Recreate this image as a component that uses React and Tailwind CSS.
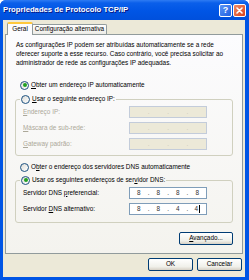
import React from "react";

function Radio({ checked }) {
  return (
    <span className="w-[9px] h-[9px] shrink-0 rounded-full border border-[#1C5180] bg-[linear-gradient(135deg,#DCDCD7,#FFFFFF)] flex items-center justify-center">
      {checked && <span className="w-[4px] h-[4px] rounded-full bg-[#21A121]" />}
    </span>
  );
}

function IpBox({ values, disabled, caret }) {
  const parts = values || ["", "", "", ""];
  return (
    <div
      className={
        "w-[78px] h-[12px] flex items-center border " +
        (disabled ? "border-[#C3CCDA] bg-[#ECE9D8] text-[#ACA899]" : "border-[#7F9DB9] bg-white text-[#333]")
      }
    >
      {parts.map((p, i) => (
        <React.Fragment key={i}>
          <span className="flex-1 text-center leading-none flex items-center justify-center">
            {p}
            {caret && i === 3 && <span className="inline-block w-[1px] h-[8px] bg-black ml-[1px]" />}
          </span>
          {i < 3 && <span className={"leading-none " + (disabled ? "text-[#C9C6B6]" : "")}>.</span>}
        </React.Fragment>
      ))}
    </div>
  );
}

function Row({ label, disabled, values, caret }) {
  return (
    <div className="flex items-center h-[12px] pl-[3px]">
      <span className={"flex-1 leading-none whitespace-nowrap " + (disabled ? "text-[#ACA899]" : "")}>{label}</span>
      <IpBox values={values} disabled={disabled} caret={caret} />
    </div>
  );
}

function Btn({ children, w }) {
  return (
    <div
      className={
        w +
        " h-[13px] rounded-[2px] border border-[#003C74] bg-[linear-gradient(to_bottom,#FFFFFF,#F0F0EA_70%,#D6D0C5)] flex items-center justify-center leading-none"
      }
    >
      {children}
    </div>
  );
}

export default function App() {
  return (
    <div className="w-[249px] h-[280px] flex flex-col bg-[#0055E5] rounded-t-[6px] overflow-hidden font-['Liberation_Sans',Arial,sans-serif] text-[6.4px] text-black">
      <div className="h-[20px] shrink-0 flex items-center pl-[3px] pr-[3px] bg-[linear-gradient(to_bottom,#2E7BF3_0%,#0A5FEA_15%,#0055E5_55%,#0050DC_100%)]">
        <span className="text-white font-bold text-[7.7px] leading-none [text-shadow:1px_1px_0_#0A1883]">
          Propriedades de Protocolo TCP/IP
        </span>
        <div className="ml-auto flex gap-[1px]">
          <div className="w-[13px] h-[13px] rounded-[2px] border border-white bg-[linear-gradient(135deg,#5A95F7,#2260E0)] flex items-center justify-center text-white font-bold text-[9px] leading-none">
            ?
          </div>
          <div className="w-[13px] h-[13px] rounded-[2px] border border-white bg-[linear-gradient(135deg,#F08A68,#D9431C)] flex items-center justify-center">
            <svg width="7" height="7" viewBox="0 0 7 7">
              <path d="M1 1 L6 6 M6 1 L1 6" stroke="white" strokeWidth="1.6" strokeLinecap="round" />
            </svg>
          </div>
        </div>
      </div>

      <div className="flex-1 ml-[3px] mr-[4px] mb-[3px] bg-[#ECE9D8] flex flex-col">
        <div className="h-[14px] flex items-end pl-[4px]">
          <div className="relative z-10 w-[26px] h-[13px] mb-[-1px] bg-[#FCFCFE] border-x border-[#919B9C] border-t-[2px] border-t-[#FFC83C] rounded-t-[2px] flex items-center justify-center leading-none">
            Geral
          </div>
          <div className="w-[74px] h-[10px] whitespace-nowrap border-t border-r border-[#919B9C] rounded-tr-[2px] bg-[linear-gradient(to_bottom,#FFFFFF,#ECEBE6)] flex items-center justify-center leading-none">
            Configuração alternativa
          </div>
        </div>

        <div className="mx-[2px] h-[220px] border border-[#919B9C] bg-[linear-gradient(to_bottom,#FCFCFE,#F4F3EE)] flex flex-col px-[9px]">
          <p className="pt-[5px] pl-[1px] leading-[9px] whitespace-nowrap">
            As configurações IP podem ser atribuídas automaticamente se a rede
            <br />
            oferecer suporte a esse recurso. Caso contrário, você precisa solicitar ao
            <br />
            administrador de rede as configurações IP adequadas.
          </p>

          <div className="mt-[13px] h-[10px] flex items-center gap-[2px] pl-[5px] leading-none">
            <Radio checked />
            <span>
              <u>O</u>bter um endereço IP automaticamente
            </span>
          </div>

          <fieldset className="mt-[4px] border border-[#D0D0BF] rounded-[3px] pl-[4px] pr-[25px] pb-[5px]">
            <legend className="px-[1px]">
              <div className="h-[10px] flex items-center gap-[2px] leading-none">
                <Radio />
                <span>
                  <u>U</u>sar o seguinte endereço IP:
                </span>
              </div>
            </legend>
            <div className="pt-[2px] flex flex-col gap-[4px]">
              <Row disabled label={<><u>E</u>ndereço IP:</>} />
              <Row disabled label={<><u>M</u>áscara de sub-rede:</>} />
              <Row disabled label={<><u>G</u>ateway padrão:</>} />
            </div>
          </fieldset>

          <div className="mt-[6px] h-[10px] flex items-center gap-[2px] pl-[5px] leading-none">
            <Radio />
            <span>
              O<u>b</u>ter o endereço dos servidores DNS automaticamente
            </span>
          </div>

          <fieldset className="mt-[3px] border border-[#D0D0BF] rounded-[3px] pl-[4px] pr-[25px] pb-[7px]">
            <legend className="px-[1px]">
              <div className="h-[10px] flex items-center gap-[2px] leading-none">
                <Radio checked />
                <span>
                  Usar os seguintes endereços de ser<u>v</u>idor DNS:
                </span>
              </div>
            </legend>
            <div className="pt-[2px] flex flex-col gap-[4px]">
              <Row label={<>Servidor DNS <u>p</u>referencial:</>} values={["8", "8", "8", "8"]} />
              <Row label={<>Servidor <u>D</u>NS alternativo:</>} values={["8", "8", "4", "4"]} caret />
            </div>
          </fieldset>

          <div className="mt-[9px] flex justify-end">
            <Btn w="w-[54px]">
              <span>
                <u>A</u>vançado...
              </span>
            </Btn>
          </div>
        </div>

        <div className="mt-[4px] flex justify-end gap-[4px] pr-[3px]">
          <Btn w="w-[45px]">OK</Btn>
          <Btn w="w-[45px]">Cancelar</Btn>
        </div>
      </div>
    </div>
  );
}
